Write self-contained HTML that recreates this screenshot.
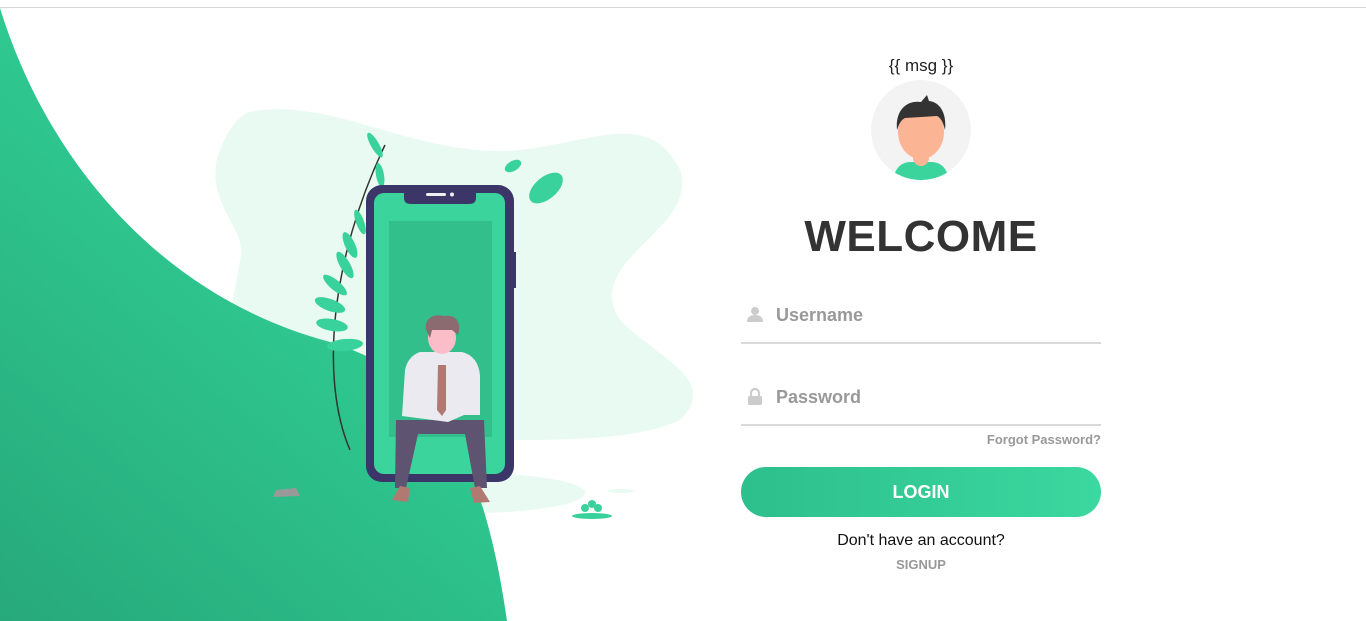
<!DOCTYPE html>
<html><head><meta charset="utf-8"><style>
body{margin:0;width:1366px;height:621px;overflow:hidden;background:#fff;font-family:"Liberation Sans",sans-serif;position:relative}
.topline{position:absolute;left:0;top:7px;width:1366px;height:1px;background:#d6d6d6}
svg.bg{position:absolute;left:0;top:0}
.msg{position:absolute;left:841px;width:160px;top:56px;text-align:center;font-size:17px;color:#222}
.avatar{position:absolute;left:871px;top:80px}
h1{position:absolute;left:741px;width:360px;top:212px;margin:0;text-align:center;font-size:44px;font-weight:bold;color:#333;letter-spacing:0.5px}
.field{position:absolute;left:741px;width:360px;height:44px;border-bottom:2px solid #d9d9d9}
.field span{position:absolute;left:35px;top:7px;font-size:18px;color:#999;font-weight:bold}
.field svg{position:absolute;left:6px;top:8px}
.forgot{position:absolute;left:900px;width:201px;top:432px;text-align:right;font-size:13px;color:#999;font-weight:bold}
.btn{position:absolute;left:741px;top:467px;width:360px;height:50px;border-radius:25px;background:linear-gradient(90deg,#2dbf8c,#3bd8a0);color:#fff;font-weight:bold;font-size:18px;text-align:center;line-height:50px}
.noacc{position:absolute;left:741px;width:360px;top:532px;text-align:center;font-size:16px;color:#111}
.signup{position:absolute;left:741px;width:360px;top:557px;text-align:center;font-size:13px;color:#999;font-weight:bold}
</style></head><body>
<div class="topline"></div>
<svg class="bg" width="720" height="621" viewBox="0 0 720 621">
<defs><linearGradient id="g" x1="0.7" y1="0" x2="0" y2="1"><stop offset="0" stop-color="#33d99b"/><stop offset="1" stop-color="#27a97b"/></linearGradient></defs>
<path d="M250,112 C330,95 420,160 520,150 C600,140 650,110 680,170 C700,230 580,260 620,320 C660,360 720,380 680,420 C640,440 560,440 500,440 L240,440 C200,400 230,330 240,260 C250,230 200,200 220,150 C230,125 240,115 250,112Z" fill="#e9faf3"/>
<ellipse cx="470" cy="493" rx="115" ry="20" fill="#e9faf3"/>
<ellipse cx="621" cy="491" rx="13" ry="2" fill="#e9faf3"/>
<path d="M0,8 C50,170 170,300 330,342 C420,370 480,430 507,621 L0,621Z" fill="url(#g)"/>
<path d="M350,450 C320,380 330,260 385,145" stroke="#333" stroke-width="1.5" fill="none"/>
<g fill="#3ad29c">
<ellipse cx="330" cy="305" rx="16" ry="6" transform="rotate(20 330 305)"/>
<ellipse cx="332" cy="325" rx="16" ry="6" transform="rotate(10 332 325)"/>
<ellipse cx="335" cy="285" rx="15" ry="5" transform="rotate(40 335 285)"/>
<ellipse cx="345" cy="265" rx="15" ry="5" transform="rotate(60 345 265)"/>
<ellipse cx="350" cy="245" rx="14" ry="5" transform="rotate(65 350 245)"/>
<ellipse cx="360" cy="222" rx="13" ry="4" transform="rotate(70 360 222)"/>
<ellipse cx="375" cy="145" rx="14" ry="4" transform="rotate(60 375 145)"/>
<ellipse cx="380" cy="175" rx="12" ry="4" transform="rotate(80 380 175)"/>
<ellipse cx="345" cy="345" rx="18" ry="6" transform="rotate(-5 345 345)"/>
<ellipse cx="546" cy="188" rx="20" ry="11" transform="rotate(-40 546 188)"/>
<ellipse cx="513" cy="166" rx="9" ry="5" transform="rotate(-30 513 166)"/>
<ellipse cx="592" cy="516" rx="20" ry="3"/>
<circle cx="585" cy="508" r="4"/><circle cx="598" cy="508" r="4"/><circle cx="592" cy="504" r="4"/>
</g>
<path d="M276,490 L296,488 L300,496 L273,497Z" fill="#999"/>
<rect x="366" y="185" width="148" height="297" rx="16" fill="#3b3568"/>
<rect x="513" y="252" width="3" height="36" fill="#3b3568"/>
<rect x="374" y="193" width="131" height="281" rx="10" fill="#3bd49d"/>
<path d="M404,192 L476,192 L476,198 Q476,204 469,204 L411,204 Q404,204 404,198Z" fill="#3b3568"/>
<rect x="426" y="193" width="20" height="3" rx="1.5" fill="#eee"/><circle cx="452" cy="194.5" r="2" fill="#eee"/>
<rect x="389" y="221" width="103" height="216" fill="#33bf8c"/>
<path d="M396,420 L484,420 L487,488 L475,488 L465,434 L418,434 L406,488 L395,488Z" fill="#5e5370"/>
<path d="M392,500 L400,486 L410,488 L408,502Z" fill="#b07a72"/><path d="M470,488 L480,486 L490,502 L474,503Z" fill="#b07a72"/>
<path d="M420,352 L462,352 Q478,356 480,375 L480,415 L464,415 L448,422 L402,416 L405,370 Q408,356 420,352Z" fill="#eaeaf0"/>
<path d="M438,365 L446,365 L446,410 L442,416 L437,410Z" fill="#b07a72"/>
<ellipse cx="442" cy="338" rx="14" ry="16" fill="#fbbec8"/>
<path d="M426,330 C424,316 436,314 444,316 C456,314 462,322 458,335 L452,330 L432,330 L430,338Z" fill="#8b6b70"/>
</svg>
<div class="msg">{{ msg }}</div>
<svg class="avatar" width="100" height="100" viewBox="0 0 100 100">
<clipPath id="c"><circle cx="50" cy="50" r="50"/></clipPath>
<g clip-path="url(#c)">
<circle cx="50" cy="50" r="50" fill="#f3f3f3"/>
<path d="M22,100 Q25,82 40,82 L60,82 Q75,82 78,100Z" fill="#3bd49d"/>
<rect x="42" y="62" width="16" height="24" rx="8" fill="#fbb595"/>
<ellipse cx="50" cy="52" rx="23" ry="27" fill="#fbb595"/>
<path d="M26,50 C24,30 36,20 50,22 L56,15 L58,21 C68,22 76,32 74,50 C72,42 70,38 66,36 L34,38 C30,40 28,44 26,50Z" fill="#333"/>
</g></svg>
<h1>WELCOME</h1>
<div class="field" style="top:298px"><svg width="16" height="16" viewBox="0 0 16 16"><circle cx="8" cy="5" r="4" fill="#ccc"/><path d="M0,16 Q0,9 8,9 Q16,9 16,16Z" fill="#ccc"/></svg><span>Username</span></div>
<div class="field" style="top:380px"><svg width="16" height="17" viewBox="0 0 16 17"><path d="M4,8 V5 A4,4 0 0 1 12,5 V8" stroke="#ccc" stroke-width="2.2" fill="none"/><rect x="1" y="8" width="14" height="9" rx="1.5" fill="#ccc"/></svg><span>Password</span></div>
<div class="forgot">Forgot Password?</div>
<div class="btn">LOGIN</div>
<div class="noacc">Don't have an account?</div>
<div class="signup">SIGNUP</div>
</body></html>
